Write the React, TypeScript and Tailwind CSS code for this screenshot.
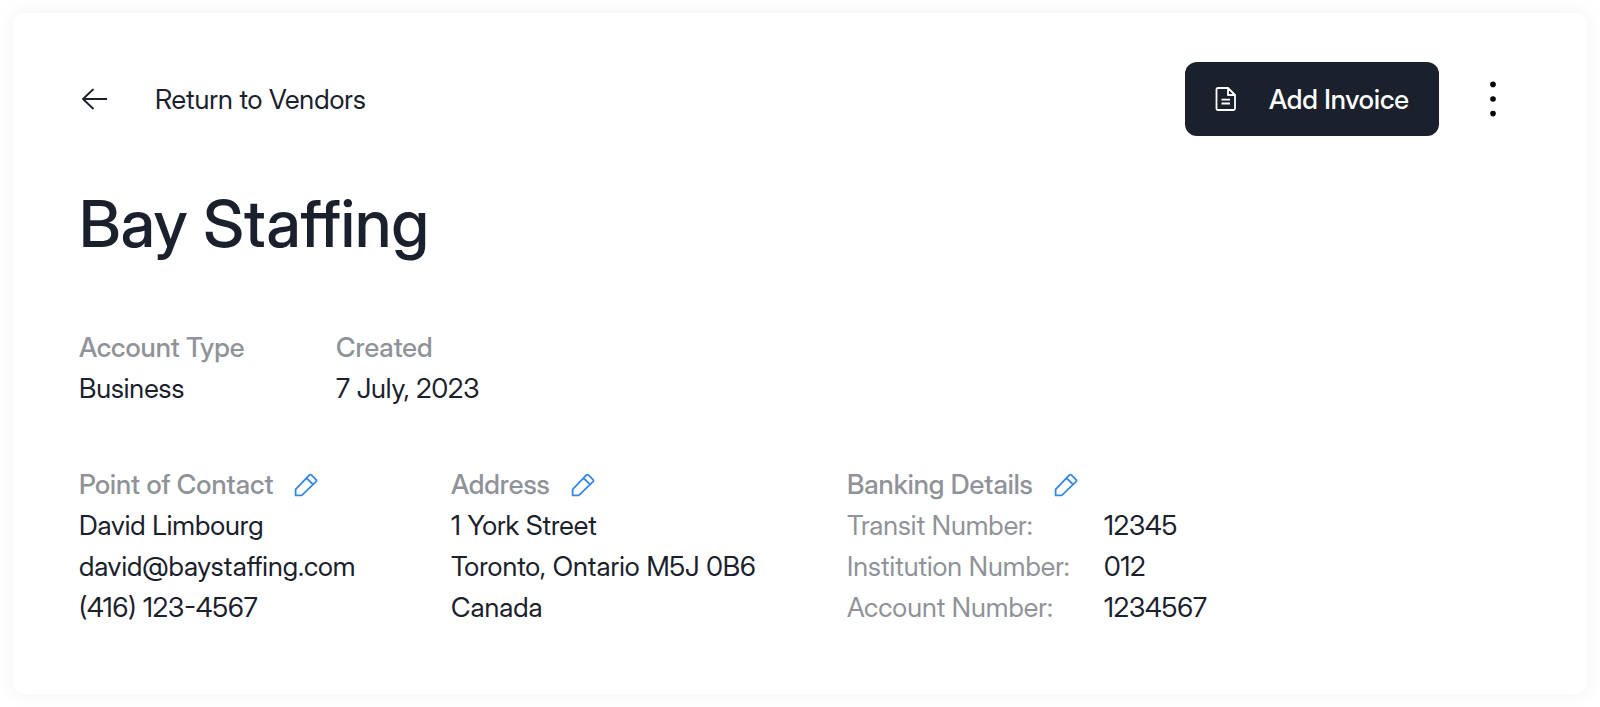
import React from "react";

function Pencil({ label }: { label: string }) {
  return (
    <button type="button" aria-label={label} className="flex text-[#3688dc]">
      <svg width="24" height="24" viewBox="0 0 24 24" fill="none" stroke="currentColor" strokeWidth="1.8" strokeLinejoin="round">
        <path d="M1.600 22.400V16.400L15.300 2.200Q16.400 1.100 17.500 2.200L22 6.700Q22.900 7.700 22 8.700L7.800 22.400ZM12.600 5.200L19 11.500" />
      </svg>
    </button>
  );
}

function EditableHeading({ title }: { title: string }) {
  return (
    <div className="flex items-center gap-[21px]">
      <h2 className="font-medium text-[#8f9298]">{title}</h2>
      <Pencil label={`Edit ${title}`} />
    </div>
  );
}

const label = "font-medium text-[#8f9298]";
const term = "text-[#8f9298]";

export default function App() {
  return (
    <div className="bg-white p-[13px] font-['Inter_Display','Inter',sans-serif] text-[27px] leading-[41px] text-[#1a202c]">
      <main className="rounded-xl bg-white px-[66px] pt-[49px] pb-[66px] shadow-[0_0_20px_rgba(0,0,0,0.06)]">
        <header className="flex items-center justify-between">
          <a href="#vendors" className="flex items-center gap-12">
            <svg width="28" height="24" viewBox="0 0 28 24" fill="none" stroke="currentColor" strokeWidth="1.8" strokeLinecap="round" strokeLinejoin="round">
              <path d="M28 12H4M14 2.500L4 12l10 9.500" />
            </svg>
            Return to Vendors
          </a>
          <div className="flex items-center gap-10">
            <button type="button" className="flex h-[74px] items-center gap-8 rounded-xl bg-[#1a202c] px-[30px] font-medium text-white">
              <svg width="22" height="24" viewBox="0 0 22 24" fill="none" stroke="currentColor" strokeWidth="1.800" strokeLinejoin="round">
                <path d="M3 1h10l7 7v13.500q0 1.500-1.500 1.500H3q-1.500 0-1.500-1.500v-19Q1.500 1 3 1zM13 1v7h7M6.500 12.700h8.500M6.500 16.500h8.500" />
              </svg>
              Add Invoice
            </button>
            <button type="button" aria-label="More" className="mr-[14px] flex text-black">
              <svg width="28" height="40" viewBox="0 0 28 40" fill="currentColor"><circle cx="14" cy="5.400" r="2.800" /><circle cx="14" cy="20" r="2.800" /><circle cx="14" cy="34.600" r="2.800" /></svg>
            </button>
          </div>
        </header>
        <h1 className="mt-12 text-[65px] leading-[80px] font-medium">Bay Staffing</h1>
        <section className="mt-[63px] grid grid-cols-[257px_auto]">
          <div><h2 className={label}>Account Type</h2><p>Business</p></div>
          <div><h2 className={label}>Created</h2><p>7 July, 2023</p></div>
        </section>
        <section className="mt-[55px] grid grid-cols-[372px_396px_auto]">
          <div>
            <EditableHeading title="Point of Contact" />
            <p>David Limbourg</p>
            <p>david@baystaffing.com</p>
            <p>(416) 123-4567</p>
          </div>
          <div>
            <EditableHeading title="Address" />
            <p>1 York Street</p>
            <p>Toronto, Ontario M5J 0B6</p>
            <p>Canada</p>
          </div>
          <div>
            <EditableHeading title="Banking Details" />
            <dl className="grid grid-cols-[257px_auto]">
              <dt className={term}>Transit Number:</dt><dd>12345</dd>
              <dt className={term}>Institution Number:</dt><dd>012</dd>
              <dt className={term}>Account Number:</dt><dd>1234567</dd>
            </dl>
          </div>
        </section>
      </main>
    </div>
  );
}
